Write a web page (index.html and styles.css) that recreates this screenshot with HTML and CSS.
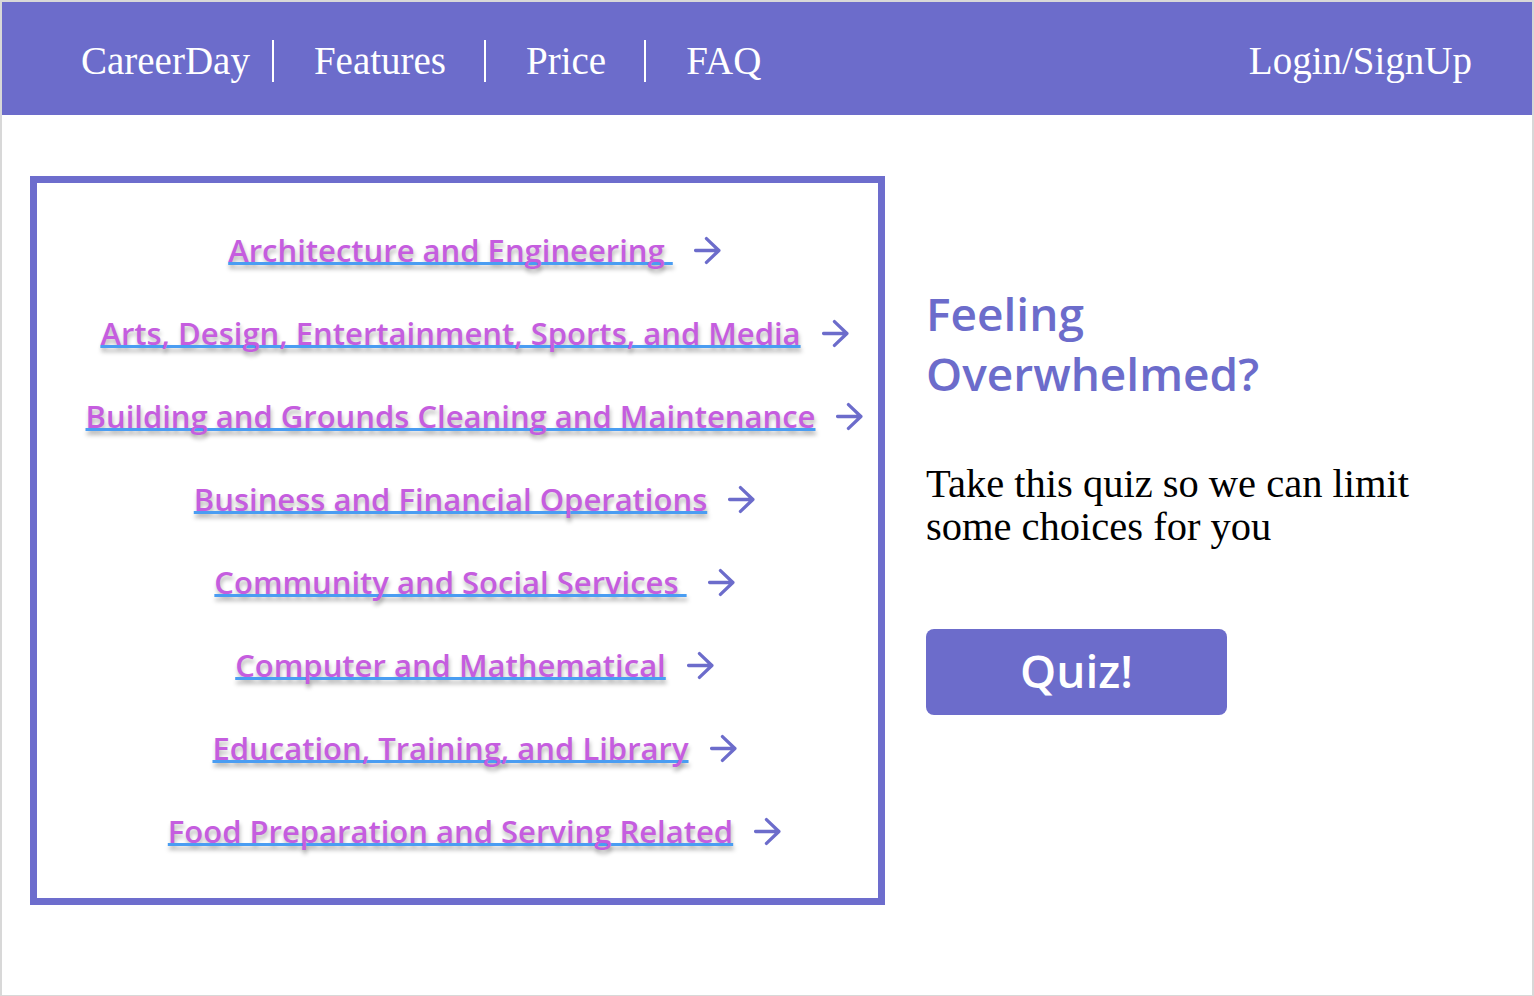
FILE: index.html
```html
<!DOCTYPE html>
<html lang="en">
<head>
<meta charset="utf-8">
<title>CareerDay</title>
<link rel="stylesheet" href="styles.css">
</head>
<body>
<div class="page">
  <header class="topbar">
    <nav class="nav-main">
      <a class="nav-item" href="#">CareerDay</a>
      <a class="nav-item" href="#">Features</a>
      <a class="nav-item" href="#">Price</a>
      <a class="nav-item" href="#">FAQ</a>
    </nav>
    <a class="nav-login" href="#">Login/SignUp</a>
  </header>

  <main class="content">
    <section class="careers">
      <ul class="career-list">
        <li class="career-item"><a class="career-link" href="#">Architecture and Engineering&nbsp;</a><svg class="arrow" viewBox="0 0 26 28"><path d="M1.5 14H24M12 2.5L24 14L12 25.5"/></svg></li>
        <li class="career-item"><a class="career-link" href="#">Arts, Design, Entertainment, Sports, and Media</a><svg class="arrow" viewBox="0 0 26 28"><path d="M1.5 14H24M12 2.5L24 14L12 25.5"/></svg></li>
        <li class="career-item"><a class="career-link" href="#">Building and Grounds Cleaning and Maintenance</a><svg class="arrow" viewBox="0 0 26 28"><path d="M1.5 14H24M12 2.5L24 14L12 25.5"/></svg></li>
        <li class="career-item"><a class="career-link" href="#">Business and Financial Operations</a><svg class="arrow" viewBox="0 0 26 28"><path d="M1.5 14H24M12 2.5L24 14L12 25.5"/></svg></li>
        <li class="career-item"><a class="career-link" href="#">Community and Social Services&nbsp;</a><svg class="arrow" viewBox="0 0 26 28"><path d="M1.5 14H24M12 2.5L24 14L12 25.5"/></svg></li>
        <li class="career-item"><a class="career-link" href="#">Computer and Mathematical</a><svg class="arrow" viewBox="0 0 26 28"><path d="M1.5 14H24M12 2.5L24 14L12 25.5"/></svg></li>
        <li class="career-item"><a class="career-link" href="#">Education, Training, and Library</a><svg class="arrow" viewBox="0 0 26 28"><path d="M1.5 14H24M12 2.5L24 14L12 25.5"/></svg></li>
        <li class="career-item"><a class="career-link" href="#">Food Preparation and Serving Related</a><svg class="arrow" viewBox="0 0 26 28"><path d="M1.5 14H24M12 2.5L24 14L12 25.5"/></svg></li>
      </ul>
    </section>

    <aside class="quiz-panel">
      <h1 class="quiz-title">Feeling Overwhelmed?</h1>
      <p class="quiz-text">Take this quiz so we can limit some choices for you</p>
      <button class="quiz-button" type="button">Quiz!</button>
    </aside>
  </main>
</div>
</body>
</html>
```

FILE: styles.css
```css
* {
  box-sizing: border-box;
}

html, body {
  margin: 0;
  padding: 0;
  background: #ffffff;
}

.page {
  width: 1534px;
  height: 996px;
  border: 2px solid #d8d8d8;
  border-bottom-width: 1px;
  background: #ffffff;
  overflow: hidden;
}

.topbar {
  height: 113px;
  background: #6c6ccb;
  display: flex;
  align-items: center;
  justify-content: space-between;
  padding: 5px 60px 0 79px;
  font-family: "Liberation Serif", "Times New Roman", serif;
  font-size: 39px;
}

.nav-main {
  display: flex;
  align-items: center;
}

.nav-item,
.nav-login {
  color: #ffffff;
  text-decoration: none;
  line-height: 42px;
}

.nav-item {
  padding: 0 38px 0 40px;
  border-left: 2px solid #ffffff;
}

.nav-item:first-child {
  padding-left: 0;
  padding-right: 22px;
  border-left: none;
}

.content {
  display: flex;
  align-items: flex-start;
  padding: 61px 0 0 28px;
}

.careers {
  width: 855px;
  height: 729px;
  border: 7px solid #6d6dcd;
  display: flex;
  align-items: center;
  justify-content: center;
  padding-left: 34px;
}

.career-list {
  list-style: none;
  margin: 0;
  padding: 0;
  display: flex;
  flex-direction: column;
  align-items: center;
}

.career-item {
  height: 83px;
  display: flex;
  align-items: center;
  gap: 21px;
}

.career-link {
  font-family: "Open Sans", "Noto Sans", sans-serif;
  font-weight: 600;
  font-size: 31px;
  color: #c55ddf;
  text-decoration: underline;
  text-decoration-color: #4a9df2;
  text-decoration-thickness: 3px;
  text-underline-offset: 0px;
  text-decoration-skip-ink: none;
  text-shadow: 1px 4px 4px rgba(0, 0, 0, 0.28);
  white-space: nowrap;
  line-height: 40px;
}

.arrow {
  width: 27px;
  height: 29px;
  flex: none;
  fill: none;
  stroke: #6c6ccb;
  stroke-width: 3.2;
  stroke-linecap: round;
  stroke-linejoin: round;
}

.quiz-panel {
  width: 500px;
  margin-left: 41px;
  padding-top: 107px;
}

.quiz-title {
  margin: 0;
  max-width: 420px;
  font-family: "Open Sans", "Noto Sans", sans-serif;
  font-weight: 600;
  font-size: 46px;
  line-height: 60px;
  color: #6c6ccb;
}

.quiz-text {
  margin: 59px 0 0;
  font-family: "Liberation Serif", "Times New Roman", serif;
  font-size: 40.5px;
  line-height: 43px;
  color: #000000;
}

.quiz-button {
  display: block;
  margin-top: 81px;
  width: 301px;
  height: 86px;
  border: none;
  border-radius: 8px;
  background: #6c6ccb;
  color: #ffffff;
  font-family: "Open Sans", "Noto Sans", sans-serif;
  font-weight: 600;
  font-size: 46px;
  padding: 0 0 4px;
  cursor: pointer;
}
```
